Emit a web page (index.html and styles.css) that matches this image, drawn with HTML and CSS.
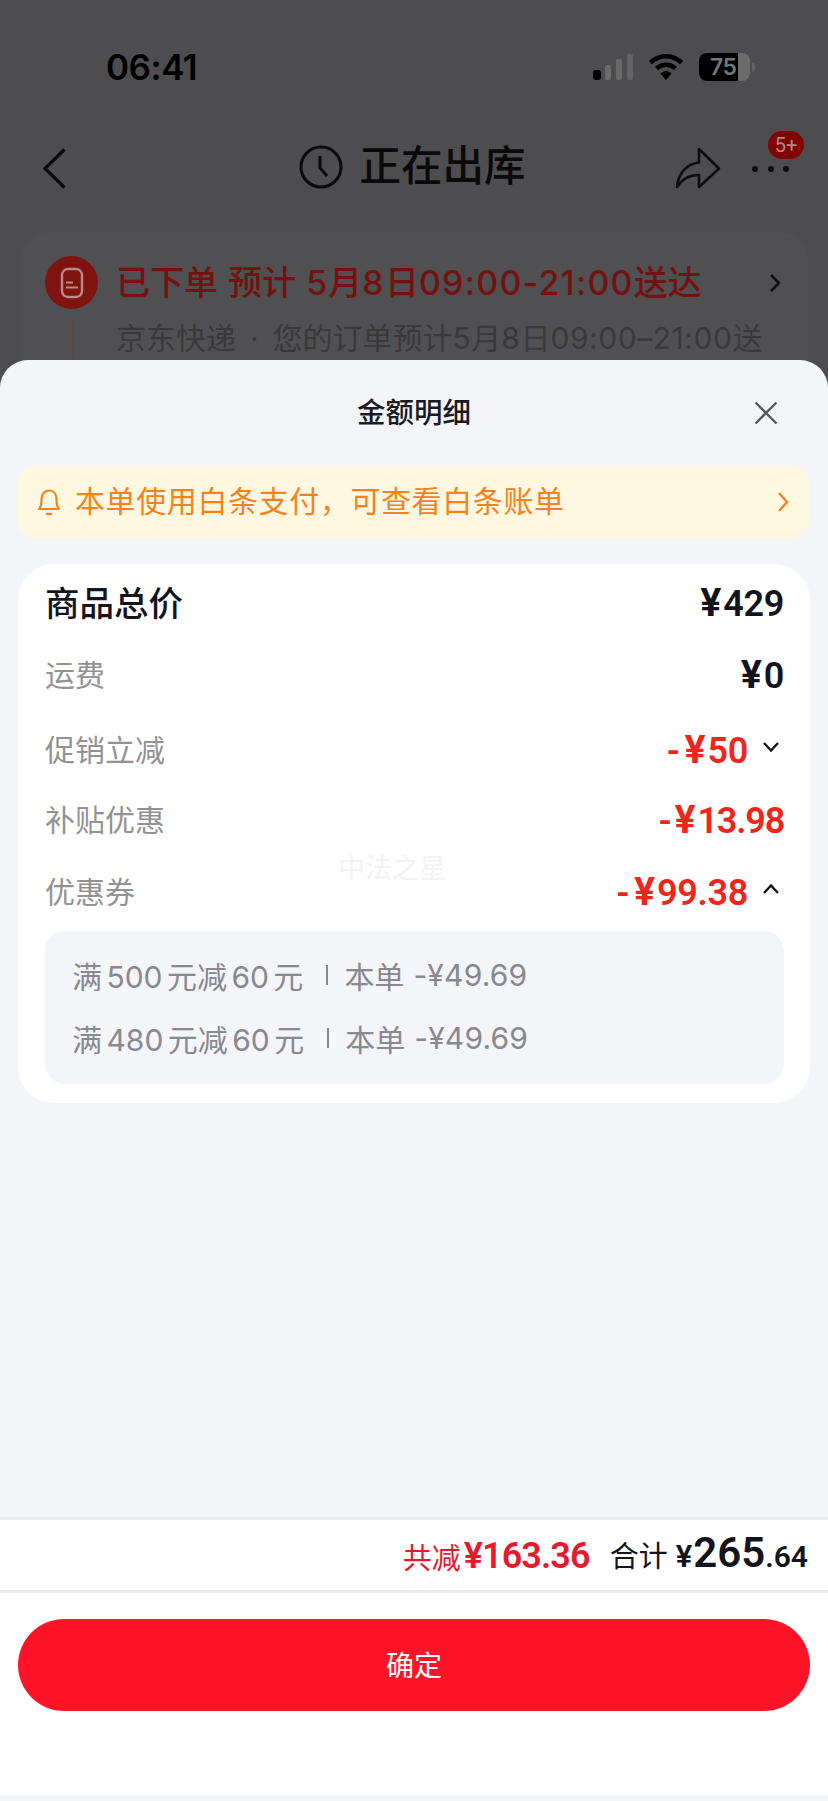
FILE: index.html
```html
<!DOCTYPE html>
<html lang="zh-CN">
<head>
<meta charset="utf-8">
<title>金额明细</title>
<link rel="stylesheet" href="styles.css">
</head>
<body>
<div class="page">
  <div class="backdrop">
    <div class="status">
      <span class="time">06:41</span>
      <div class="status-icons">
        <svg class="signal" width="40" height="26" viewBox="0 0 40 26"><rect x="0" y="16" width="8" height="10" rx="3" fill="#000"/><rect x="12" y="11" width="6" height="15" rx="2" fill="#6a6a6b"/><rect x="23" y="5" width="6" height="21" rx="2" fill="#686869"/><rect x="34" y="0" width="6" height="26" rx="2" fill="#646465"/></svg>
        <svg class="wifi" width="34" height="27" viewBox="0 0 34 27"><path d="M1.5 9.5C10.5 1 23.5 1 32.5 9.5" fill="none" stroke="#000" stroke-width="4.5"/><path d="M7.5 15.5C13 10.5 21 10.5 26.5 15.5" fill="none" stroke="#000" stroke-width="4.5"/><path d="M11.5 20.5C15 17 19 17 22.5 20.5L17 27Z" fill="#000"/></svg>
        <div class="battery"><div class="battery-body"><span class="battery-num">75</span></div><div class="battery-rest"></div><div class="battery-tip"></div></div>
      </div>
    </div>
    <div class="nav">
      <svg class="back" width="23" height="41" viewBox="0 0 23 41"><path d="M21.5 1.5L2 20.5L21.5 39.5" fill="none" stroke="#0a0a0a" stroke-width="3.2"/></svg>
      <div class="nav-title">
        <svg width="44" height="44" viewBox="0 0 44 44"><circle cx="22" cy="22" r="20" fill="none" stroke="#0a0a0a" stroke-width="3"/><path d="M21 11V23L28 31" fill="none" stroke="#0a0a0a" stroke-width="3"/></svg>
        <span>正在出库</span>
      </div>
      <div class="nav-actions">
        <svg class="share" width="46" height="42" viewBox="0 0 46 42"><path d="M2 40C3 26 12 17 24 15.5V2L44 21.5L24 40V28C15 28 7 32 2 40Z" fill="none" stroke="#0d0d0d" stroke-width="2.6" stroke-linejoin="round"/></svg>
        <div class="more">
          <i class="dot"></i><i class="dot"></i><i class="dot"></i>
          <span class="badge">5+</span>
        </div>
      </div>
    </div>
    <div class="order-card">
      <div class="order-head">
        <div class="order-icon">
          <svg width="24" height="32" viewBox="0 0 24 32"><rect x="2" y="2" width="20" height="28" rx="6" fill="none" stroke="#b98a88" stroke-width="2.4"/><path d="M6 15.5H13M6 20.5H18" stroke="#b98a88" stroke-width="2.2"/></svg>
        </div>
        <div class="order-title">已下单 预计 <span class="num">5</span>月<span class="num">8</span>日<span class="num">09:00-21:00</span>送达</div>
        <svg class="order-chevron" width="12" height="20" viewBox="0 0 12 20"><path d="M2 2L10 10L2 18" fill="none" stroke="#111" stroke-width="2.6"/></svg>
      </div>
      <div class="order-sub"><div class="order-line"></div><span>京东快递 · 您的订单预计<span class="num">5</span>月<span class="num">8</span>日<span class="num">09:00–21:00</span>送</span></div>
    </div>
  </div>

  <div class="sheet">
    <div class="sheet-head">
      <span class="sheet-title">金额明细</span>
      <svg class="close" width="24" height="24" viewBox="0 0 24 24"><path d="M1.5 1.5L22.5 22.5M22.5 1.5L1.5 22.5" stroke="#55555f" stroke-width="2.3"/></svg>
    </div>
    <div class="notice">
      <svg width="24" height="28" viewBox="0 0 24 28"><path d="M2 21C4.5 18.5 4.5 16 4.5 11.5C4.5 6 7.5 2.5 12 2.5C16.5 2.5 19.5 6 19.5 11.5C19.5 16 19.5 18.5 22 21Z" fill="none" stroke="#f58220" stroke-width="2.2" stroke-linejoin="round"/><path d="M9 26H15" stroke="#f58220" stroke-width="2.2"/></svg>
      <span class="notice-text">本单使用白条支付，可查看白条账单</span>
      <svg class="notice-chevron" width="12" height="22" viewBox="0 0 12 22"><path d="M2 2L10 11L2 20" fill="none" stroke="#f58220" stroke-width="2.4"/></svg>
    </div>
    <div class="detail">
      <div class="row row-total"><span class="label-main">商品总价</span><span class="amount"><span class="y">¥</span>429</span></div>
      <div class="row row-ship"><span class="label">运费</span><span class="amount"><span class="y">¥</span>0</span></div>
      <div class="row row-promo"><span class="label">促销立减</span><span class="value-wrap"><span class="amount red">- <span class="y">¥</span>50</span><svg class="toggle" width="18" height="12" viewBox="0 0 18 12"><path d="M2 2L9 9.5L16 2" fill="none" stroke="#111" stroke-width="2.3"/></svg></span></div>
      <div class="row row-subsidy"><span class="label">补贴优惠</span><span class="amount red narrow">- <span class="y">¥</span>13.98</span></div>
      <div class="row row-coupon"><span class="label">优惠券</span><span class="value-wrap"><span class="amount red">- <span class="y">¥</span>99.38</span><svg class="toggle" width="18" height="12" viewBox="0 0 18 12"><path d="M2 10L9 2.5L16 10" fill="none" stroke="#111" stroke-width="2.3"/></svg></span></div>
      <span class="watermark">中法之星</span>
      <div class="coupons">
        <div class="coupon">满 500 元减 60 元<i class="sep"></i>本单<span class="price">-¥49.69</span></div>
        <div class="coupon">满 480 元减 60 元<i class="sep"></i>本单<span class="price">-¥49.69</span></div>
      </div>
    </div>
    <div class="footer">
      <div class="sum">
        <span class="saved">共减<b>¥163.36</b></span>
        <span class="total">合计 <b class="yen">¥</b><b class="big">265</b><b class="small">.64</b></span>
      </div>
      <div class="action"><div class="confirm">确定</div></div>
      <div class="home-strip"></div>
    </div>
  </div>
</div>
</body>
</html>
```
FILE: styles.css
```css
* { box-sizing: border-box; }
html, body { margin: 0; padding: 0; }
body { font-family: Roboto, "Noto Sans CJK SC", sans-serif; }
.page { position: relative; width: 828px; height: 1801px; overflow: hidden; background: #4d4d4f; }
.backdrop { height: 360px; overflow: hidden; color: #0a0a0a; }

.status { height: 134px; padding: 47px 0 0 106px; display: flex; justify-content: space-between; align-items: flex-start; }
.time { font: 600 35px/40px Inter, sans-serif; letter-spacing: -0.5px; color: #000; }
.status-icons { display: flex; align-items: flex-end; gap: 16px; height: 33px; padding: 0 73px 0 0; }
.signal { display: block; }
.wifi { display: block; }
.battery { display: flex; align-items: center; height: 28px; margin-bottom: -1px; }
.battery-body { width: 39px; height: 28px; background: #000; border-radius: 8px 0 0 8px; display: flex; align-items: center; padding-left: 11px; }
.battery-num { font: 600 23px/28px Inter, sans-serif; letter-spacing: -0.5px; color: #767677; }
.battery-rest { width: 12px; height: 28px; background: #6b6b6c; border-radius: 0 8px 8px 0; }
.battery-tip { width: 3px; height: 9px; margin-left: 2px; background: #636364; border-radius: 0 3px 3px 0; }

.nav { position: relative; height: 66px; margin-bottom: 32px; display: flex; align-items: center; justify-content: center; }
.back { position: absolute; left: 43px; top: 14px; }
.nav-title { display: flex; align-items: center; gap: 16px; margin-left: -3px; font-size: 41.5px; font-weight: 500; line-height: 48px; }
.nav-actions { position: absolute; left: 675px; top: 13px; display: flex; }
.share { display: block; }
.more { position: relative; display: flex; gap: 9.5px; margin: 19px 0 0 31px; }
.dot { width: 6px; height: 6px; border-radius: 50%; background: #0d0d0d; }
.badge { position: absolute; left: 16px; top: -35px; width: 36px; height: 28px; border-radius: 14px; background: #800606; color: #b98583; font: 400 20px/28px Roboto, sans-serif; text-align: center; }

.order-card { margin: 0 20px; height: 200px; background: #505052; border-radius: 28px; padding: 24px 25px 0; }
.order-head { display: flex; align-items: center; height: 53px; }
.order-icon { width: 53px; height: 53px; flex: none; border-radius: 50%; background: #7f1310; display: flex; align-items: center; justify-content: center; }
.order-title { margin-left: 18px; font-family: Inter, "Noto Sans CJK SC", sans-serif; font-size: 34px; font-weight: 500; word-spacing: 1px; line-height: 53px; color: #731210; white-space: nowrap; flex: 1; }
.order-title .num { letter-spacing: 1.2px; }
.order-chevron { margin-right: 2px; }
.order-sub { position: relative; display: flex; height: 60px; padding: 8px 0 0 71px; font-family: Inter, "Noto Sans CJK SC", sans-serif; font-size: 30px; word-spacing: 5.5px; line-height: 42px; color: #39393a; white-space: nowrap; }
.order-sub .num { letter-spacing: 0.55px; }
.order-line { position: absolute; left: 27px; top: 9px; width: 1px; height: 60px; background: #5f4443; }

.sheet { position: absolute; left: 0; top: 360px; width: 828px; height: 1441px; border-radius: 28px 28px 0 0; background: #f4f5f9; display: flex; flex-direction: column; }
.sheet-head { position: relative; height: 106px; flex: none; display: flex; align-items: center; justify-content: center; }
.sheet-title { font-size: 28.5px; font-weight: 500; line-height: 106px; padding-top: 1px; color: #1a1a24; }
.close { position: absolute; left: 754px; top: 41px; }
.notice { flex: none; margin: 0 19px 0 18px; height: 72px; border-radius: 18px; background: #fff8e0; display: flex; align-items: center; padding: 0 20px 0 19px; gap: 14px; color: #f58220; }
.notice svg { display: block; flex: none; }
.notice-text { flex: 1; font-size: 30px; letter-spacing: 0.6px; line-height: 72px; }

.detail { position: relative; flex: none; margin: 26px 18px 0; height: 539px; border-radius: 36px; background: #fff; }
.row { position: absolute; left: 27px; right: 26px; display: flex; justify-content: space-between; align-items: center; height: 50px; }
.row-total { top: 14px; }
.row-ship { top: 86px; }
.row-promo { top: 161px; }
.row-subsidy { top: 231px; }
.row-coupon { top: 303px; }
.label-main { font-size: 34.5px; font-weight: 500; color: #14141c; margin-top: -4px; }
.label { font-size: 30px; color: #929292; margin-top: -4px; }
.amount { font: 600 36px/50px Roboto, sans-serif; word-spacing: -4px; color: #14141c; letter-spacing: -0.3px; }
.amount.red { color: #f1251b; }
.amount.narrow { letter-spacing: -1.2px; }
.y { font-family: Inter, sans-serif; font-size: 38px; font-weight: 700; letter-spacing: 1.5px; }
.value-wrap { display: flex; align-items: center; gap: 14px; padding-right: 4px; }
.toggle { display: block; margin-top: -6px; }
.watermark { position: absolute; left: 320px; top: 287px; font-size: 27px; line-height: 36px; color: #f3f3f5; }
.coupons { position: absolute; left: 27px; right: 26px; top: 367px; height: 153px; border-radius: 20px; background: #f4f5f9; padding: 12px 27px 0; }
.coupon { display: flex; align-items: center; height: 63px; font-family: Inter, "Noto Sans CJK SC", sans-serif; font-size: 30px; word-spacing: -4px; color: #88888f; white-space: pre; }
.sep { width: 2px; height: 20px; margin: 0 16px 0 23px; background: #88888f; }
.price { margin-left: 9px; letter-spacing: 0.2px; }

.footer { margin-top: auto; flex: none; background: #fff; height: 284px; display: flex; flex-direction: column; border-top: 3px solid #ececee; }
.sum { height: 73px; flex: none; display: flex; justify-content: flex-end; align-items: center; gap: 20px; padding-right: 20px; border-bottom: 3px solid #ececee; }
.saved { font-size: 29px; color: #e8192c; display: flex; align-items: center; padding-top: 2px; }
.saved b { font: 600 36px/42px Roboto, sans-serif; letter-spacing: -0.9px; margin-left: 3px; }
.total { font-size: 29px; color: #14141c; display: flex; align-items: baseline; }
.total .yen { font: 600 31px/42px Roboto, sans-serif; margin-left: 8px; margin-right: 1px; }
.total .big { font: 600 42px/42px Roboto, sans-serif; }
.total .small { font: 600 30px/42px Roboto, sans-serif; }
.action { flex: none; height: 202px; padding: 26px 18px 0; }
.confirm { height: 92px; border-radius: 46px; background: #ff1427; color: #fff; font-size: 28px; line-height: 95px; text-align: center; }
.home-strip { height: 6px; flex: none; background: #f4f5f9; }
```
